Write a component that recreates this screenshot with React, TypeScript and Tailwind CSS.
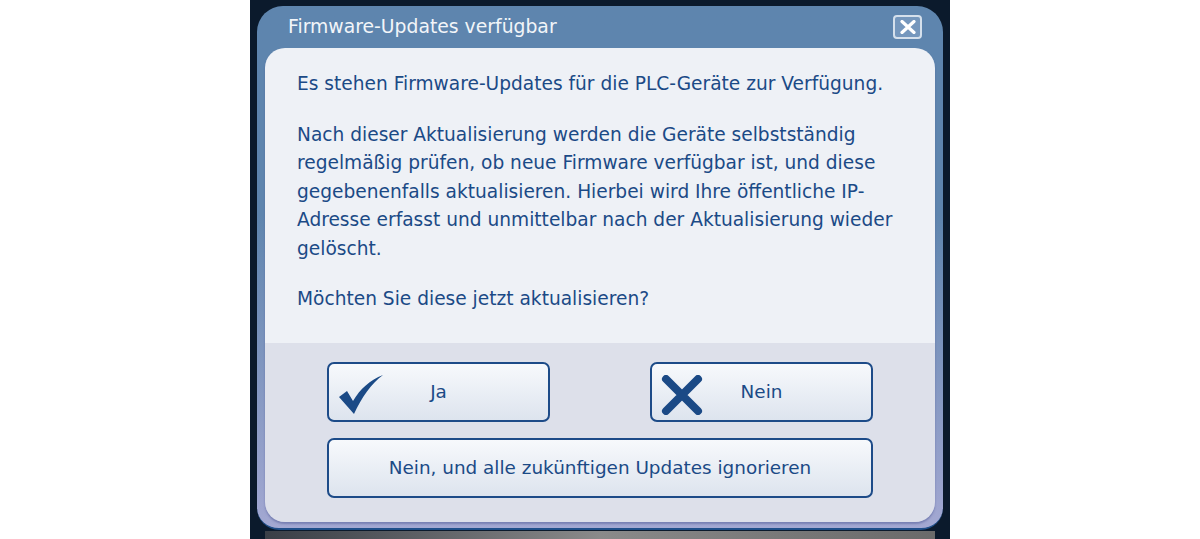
import React from "react";

const font = { fontFamily: "Tahoma, 'DejaVu Sans', 'Noto Sans', sans-serif" };

function Check() {
  return (
    <svg width="46" height="40" viewBox="0 0 46 40" className="block">
      <path d="M1 22 L9 16 L15 26 C22 14 32 5 45 0 C33 9 24 22 16 39 Z" fill="#1b4a86" />
    </svg>
  );
}

function Cross() {
  return (
    <svg width="42" height="40" viewBox="0 0 42 40" className="block">
      <path d="M5 4 L37 36 M37 4 L5 36" stroke="#1b4a86" strokeWidth="8" strokeLinecap="round" />
    </svg>
  );
}

function Btn({ children, icon, className }: { children: React.ReactNode; icon?: React.ReactNode; className?: string }) {
  return (
    <div
      className={
        "relative flex h-[60px] items-center justify-center rounded-[7px] border-2 border-[#1d4b88] bg-gradient-to-b from-[#f7f9fc] to-[#dde4ee] text-[18.4px] text-[#1b4a86] " +
        (className ?? "")
      }
    >
      {icon && <div className="absolute left-[9px] top-[11px]">{icon}</div>}
      <span>{children}</span>
    </div>
  );
}

export default function App() {
  return (
    <div className="flex h-[539px] w-[1200px] justify-center bg-white" style={font}>
      <div className="flex w-[700px] flex-col bg-[#0b1a2c]">
        <div className="ml-[7px] mr-[7px] mt-[6px] flex h-[524px] flex-col rounded-t-[26px] rounded-b-[22px] border-b-2 border-[#1f4f8a] bg-gradient-to-b from-[#5e85ae] from-40% to-[#a3a8d2] px-[8px] pb-[6px]">
          <div className="flex h-[42px] items-center justify-between pl-[23px] pr-[13px]">
            <span className="text-[18.8px] text-[#f2f5f9]">Firmware-Updates verfügbar</span>
            <div className="flex h-[24px] w-[29px] items-center justify-center rounded-[4px] border-2 border-[#d5e0ec] bg-[#7597bd]">
              <svg width="16" height="14" viewBox="0 0 16 14">
                <path d="M2 1.5 L14 12.5 M14 1.5 L2 12.5" stroke="#ffffff" strokeWidth="3.2" strokeLinecap="round" />
              </svg>
            </div>
          </div>
          <div className="flex flex-1 flex-col overflow-hidden rounded-[20px] shadow-[0_2px_2px_rgba(80,90,150,0.5)]">
            <div className="flex h-[295px] flex-col bg-[#eef1f6] pl-[32px] pr-[12px] pt-[22px] text-[18.6px] leading-[28.5px] text-[#1b4a86]">
              <p>Es stehen Firmware-Updates für die PLC-Geräte zur Verfügung.</p>
              <p className="mt-[22px]">
                Nach dieser Aktualisierung werden die Geräte selbstständig
                <br />
                regelmäßig prüfen, ob neue Firmware verfügbar ist, und diese
                <br />
                gegebenenfalls aktualisieren. Hierbei wird Ihre öffentliche IP-
                <br />
                Adresse erfasst und unmittelbar nach der Aktualisierung wieder
                <br />
                gelöscht.
              </p>
              <p className="mt-[22px]">Möchten Sie diese jetzt aktualisieren?</p>
            </div>
            <div className="flex flex-1 flex-col gap-[16px] bg-[#dde0ea] pl-[62px] pr-[62px] pt-[19px]">
              <div className="flex justify-between">
                <Btn className="w-[223px]" icon={<Check />}>Ja</Btn>
                <Btn className="w-[223px]" icon={<Cross />}>Nein</Btn>
              </div>
              <Btn>Nein, und alle zukünftigen Updates ignorieren</Btn>
            </div>
          </div>
        </div>
        <div className="mx-[15px] mt-[1px] flex-1 bg-gradient-to-r from-[#3a3f47] via-[#8a8a8a] to-[#6a6a6a]" />
      </div>
    </div>
  );
}
